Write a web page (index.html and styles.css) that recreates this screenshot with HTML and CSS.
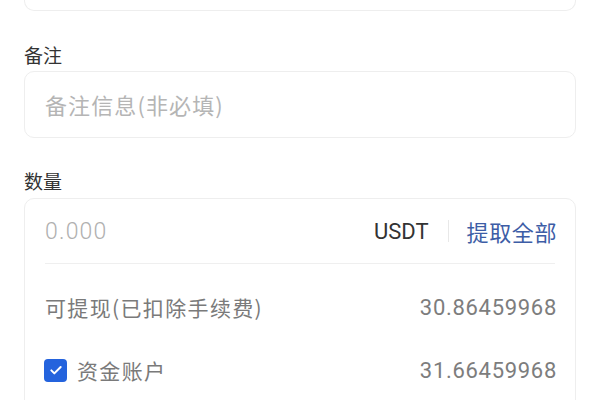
FILE: index.html
```html
<!DOCTYPE html>
<html lang="zh">
<head>
<meta charset="utf-8">
<link rel="stylesheet" href="styles.css">
</head>
<body>
<div class="page">
  <div class="card card-top"></div>

  <div class="label label-first">备注</div>
  <div class="card memo">
    <span class="placeholder">备注信息(非必填)</span>
  </div>

  <div class="label label-second">数量</div>
  <div class="card amount">
    <div class="amount-row">
      <span class="amount-input">0.000</span>
      <span class="unit">USDT</span>
      <span class="vsep"></span>
      <span class="take-all">提取全部</span>
    </div>
    <div class="info-row">
      <span class="info-label">可提现(已扣除手续费)</span>
      <span class="num">30.86459968</span>
    </div>
    <div class="info-row">
      <span class="check-label">
        <span class="checkbox">
          <svg viewBox="0 0 24 24" width="16" height="16"><path d="M5 12.5l4.5 4.5L19 7.5" fill="none" stroke="#fff" stroke-width="3" stroke-linecap="round" stroke-linejoin="round"/></svg>
        </span>
        <span class="info-label">资金账户</span>
      </span>
      <span class="num">31.66459968</span>
    </div>
  </div>
</div>
</body>
</html>
```

FILE: styles.css
```css
html, body {
  margin: 0;
  padding: 0;
  background: #ffffff;
}
body {
  font-family: "Noto Sans CJK SC", "Noto Sans", sans-serif;
  color: #333333;
}
.page {
  padding: 0 24px;
}
.card {
  border: 1px solid #eeeeee;
  border-radius: 10px;
  background: #fff;
}
.card-top {
  height: 10px;
  border-top: none;
  border-radius: 0 0 10px 10px;
}
.label {
  font-size: 19px;
  line-height: 24px;
  color: #333;
}
.label-first {
  margin-top: 32px;
  margin-bottom: 4px;
}
.label-second {
  margin-top: 31px;
  margin-bottom: 5px;
}
.memo {
  height: 65px;
  padding: 0 20px;
  display: flex;
  align-items: center;
}
.placeholder {
  font-size: 22px;
  letter-spacing: 1.1px;
  color: #b5b5b5;
  margin-top: -2px;
}
.amount {
  padding: 0 18px 30px 20px;
}
.amount-row {
  height: 64px;
  display: flex;
  align-items: center;
  border-bottom: 1px solid #efefef;
  margin-right: 2px;
}
.amount-input {
  flex: 1;
  font-family: Roboto, sans-serif;
  font-weight: 300;
  font-size: 23px;
  letter-spacing: 1.2px;
  color: #b0b0b0;
}
.unit {
  font-family: Roboto, sans-serif;
  font-size: 22px;
  color: #333;
}
.vsep {
  width: 1px;
  height: 22px;
  background: #e8e8e8;
  margin: 0 18px 0 19px;
}
.take-all {
  font-size: 22px;
  color: #3d5da6;
  letter-spacing: 0.6px;
  margin-right: -2px;
}
.info-row {
  margin-top: 23px;
  height: 40px;
  display: flex;
  align-items: center;
  justify-content: space-between;
}
.info-label {
  font-size: 21px;
  letter-spacing: 1.35px;
  color: #7a7a7a;
}
.num {
  font-family: Roboto, sans-serif;
  font-size: 22px;
  letter-spacing: 0.7px;
  color: #7d7d7d;
}
.check-label {
  display: flex;
  align-items: center;
  gap: 10px;
}
.checkbox {
  width: 23px;
  height: 23px;
  border-radius: 4px;
  background: #2463dd;
  display: flex;
  align-items: center;
  justify-content: center;
  margin-left: -1px;
}
```
